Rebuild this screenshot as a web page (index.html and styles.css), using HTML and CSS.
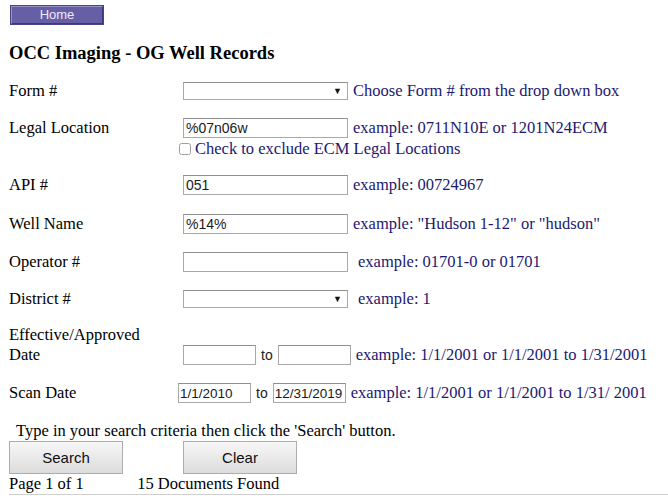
FILE: index.html
```html
<!DOCTYPE html>
<html lang="en">
<head>
    <meta charset="UTF-8">
    <title>OCC Imaging - OG Well Records</title>
    <link rel="stylesheet" href="styles.css">
</head>
<body>

    <!-- Top menu -->
    <div class="nav">
        <a href="#" class="home-button">Home</a>
    </div>

    <h1 class="title">OCC Imaging - OG Well Records</h1>

    <!-- Search form -->
    <form class="search-form">
        <div class="row row-form">
            <span class="label">Form #</span>
            <span class="select-wrap"><select class="field"></select></span>
            <span class="hint">Choose Form # from the drop down box</span>
        </div>

        <div class="row row-legal">
            <span class="label">Legal Location</span>
            <input class="field" type="text" value="%07n06w">
            <span class="hint">example: 0711N10E or 1201N24ECM</span>
        </div>
        <div class="row row-check">
            <input type="checkbox" class="check">
            <span class="hint">Check to exclude ECM Legal Locations</span>
        </div>

        <div class="row row-api">
            <span class="label">API #</span>
            <input class="field" type="text" value="051">
            <span class="hint">example: 00724967</span>
        </div>

        <div class="row row-well">
            <span class="label">Well Name</span>
            <input class="field" type="text" value="%14%">
            <span class="hint">example: "Hudson 1-12" or "hudson"</span>
        </div>

        <div class="row row-operator">
            <span class="label">Operator #</span>
            <input class="field" type="text" value="">
            <span class="hint hint-wide">example: 01701-0 or 01701</span>
        </div>

        <div class="row row-district">
            <span class="label">District #</span>
            <span class="select-wrap"><select class="field"></select></span>
            <span class="hint hint-wide">example: 1</span>
        </div>

        <div class="row row-eff">
            <span class="label">Effective/Approved<br>Date</span>
            <input class="date" type="text" value="">
            <span class="to">to</span>
            <input class="date" type="text" value="">
            <span class="hint">example: 1/1/2001 or 1/1/2001 to 1/31/2001</span>
        </div>

        <div class="row row-scan">
            <span class="label label-scan">Scan Date</span>
            <input class="date" type="text" value="1/1/2010">
            <span class="to">to</span>
            <input class="date" type="text" value="12/31/2019">
            <span class="hint">example: 1/1/2001 or 1/1/2001 to 1/31/ 2001</span>
        </div>

        <p class="instructions">Type in your search criteria then click the 'Search' button.</p>

        <div class="buttons">
            <button type="button" class="btn">Search</button>
            <button type="button" class="btn">Clear</button>
        </div>
    </form>

    <div class="results-bar">
        <span class="page-info">Page 1 of 1</span>
        <span>15 Documents Found</span>
    </div>
    <div class="results"></div>

</body>
</html>
```

FILE: styles.css
```css
/* General */
body {
    margin: 0;
    font-family: 'Liberation Serif', 'Times New Roman', serif;
    font-size: 16.5px;
    color: #000;
    background: #fff;
}

/* Home button */
.nav {
    padding: 5px 0 0 10px;
    height: 21px;
}
.home-button {
    display: block;
    box-sizing: border-box;
    width: 94px;
    height: 20px;
    background-color: #675fa6;
    border: 2px solid;
    border-color: #9791c8 #3e3780 #3e3780 #9791c8;
    outline: 1px solid #4a438c;
    outline-offset: -1px;
    color: #eceaf8;
    font-family: 'Liberation Sans', Arial, sans-serif;
    font-size: 13px;
    line-height: 16px;
    text-align: center;
    text-decoration: none;
}

.title {
    margin: 17px 0 0 9px;
    font-size: 18.5px;
    line-height: 20px;
    font-weight: bold;
}

/* Form rows */
.search-form {
    padding-left: 9px;
}
.row {
    display: flex;
    align-items: center;
    height: 20px;
}
.label {
    width: 174px;
    flex-shrink: 0;
}
.hint {
    color: #1c1870;
    margin-left: 5px;
    white-space: nowrap;
}
.hint-wide {
    margin-left: 10px;
}

.row-form { margin-top: 18px; }
.row-legal { margin-top: 17px; }
.row-check { margin-top: 1px; padding-left: 170px; }
.row-api { margin-top: 16px; }
.row-well { margin-top: 19px; }
.row-operator { margin-top: 18px; }
.row-district { margin-top: 17px; }
.row-eff {
    margin-top: 16px;
    height: 40px;
    align-items: flex-end;
}
.row-eff .label { line-height: 20px; }
.row-eff .hint, .row-eff .to { line-height: 20px; }
.row-scan { margin-top: 18px; }
.label-scan { width: 169px; }

/* Inputs */
.field, .date {
    box-sizing: border-box;
    height: 20px;
    margin: 0;
    padding: 1px 2px;
    border: 1px solid #a9a9a9;
    border-top-color: #8f8f8f;
    font-family: 'Liberation Sans', Arial, sans-serif;
    font-size: 14px;
    color: #1a1a1a;
    background: #fff;
}
.field {
    width: 165px;
}
.date {
    width: 73px;
    font-size: 13.5px;
    padding: 1px 1px;
}
.to {
    margin: 0 5px;
    font-family: 'Liberation Sans', Arial, sans-serif;
    font-size: 14px;
    color: #222;
}

/* Select with small arrow */
.select-wrap {
    position: relative;
    display: inline-block;
    height: 20px;
}
.select-wrap select {
    appearance: none;
    -webkit-appearance: none;
    height: 18px;
    margin-top: 1px;
    border-radius: 0;
}
.select-wrap::after {
    content: '\25BC';
    position: absolute;
    right: 6px;
    top: 5px;
    font-size: 9px;
    line-height: 10px;
    color: #111;
    pointer-events: none;
}

.check {
    margin: 0 4px 0 0;
    width: 12px;
    height: 12px;
    filter: grayscale(1) opacity(0.7);
}
.row-check .hint {
    margin-left: 0;
}

.instructions {
    margin: 18px 0 0 7px;
    line-height: 20px;
}

/* Buttons */
.buttons {
    display: flex;
    gap: 60px;
}
.btn {
    box-sizing: border-box;
    width: 114px;
    height: 33px;
    margin: 0;
    border: 1px solid #adadad;
    border-radius: 0;
    background: linear-gradient(#f7f7f7, #dcdcdc);
    font-family: 'Liberation Sans', Arial, sans-serif;
    font-size: 15px;
    color: #111;
}

/* Results */
.results-bar {
    margin-left: 9px;
    line-height: 19px;
}
.page-info {
    display: inline-block;
    width: 124px;
}
.results {
    margin-left: 9px;
    margin-top: 1px;
    border-top: 1px solid #cfcfcf;
    height: 10px;
}
```
